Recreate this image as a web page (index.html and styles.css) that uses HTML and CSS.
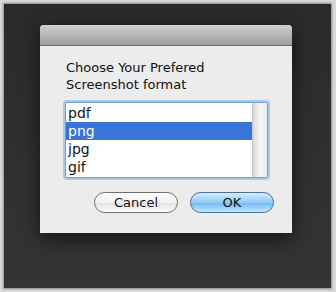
FILE: index.html
```html
<!DOCTYPE html>
<html lang="en">
<head>
    <meta charset="UTF-8">
    <title>Screenshot format</title>
    <link rel="stylesheet" href="styles.css">
</head>
<body>
    <div class="backdrop">
        <div class="dialog">
            <div class="titlebar"></div>
            <div class="dialog-body">
                <p class="prompt">Choose Your Prefered<br>Screenshot format</p>
                <div class="listbox">
                    <div class="list-items">
                        <div class="list-item">pdf</div>
                        <div class="list-item selected">png</div>
                        <div class="list-item">jpg</div>
                        <div class="list-item">gif</div>
                    </div>
                    <div class="scroll-track"></div>
                </div>
                <div class="buttons">
                    <button class="btn">Cancel</button>
                    <button class="btn btn-default">OK</button>
                </div>
            </div>
        </div>
    </div>
</body>
</html>
```

FILE: styles.css
```css
body {
    margin: 0;
    background-color: #d9d9d9;
    font-family: "DejaVu Sans", Verdana, sans-serif;
}

.backdrop {
    margin: 4px 5px 4px 4px;
    height: 284px;
    padding-top: 21px;
    box-sizing: border-box;
    background: linear-gradient(to bottom, #2a2a2a, #303030 60%, #343434);
    box-shadow: 0 0 2px 1px #8a8a8a;
}

.dialog {
    margin-left: 36px;
    width: 252px;
    background-color: #ececec;
    border-radius: 4px 4px 0 0;
    box-shadow: 0 6px 18px rgba(0, 0, 0, 0.6);
}

.titlebar {
    height: 20px;
    border-radius: 4px 4px 0 0;
    background: linear-gradient(to bottom, #d0d0d0, #9d9d9d);
    border-bottom: 1px solid #6e6e6e;
}

.dialog-body {
    padding: 13px 0 20px 23px;
}

.prompt {
    margin: 0 0 9px 3px;
    font-size: 13px;
    line-height: 17px;
    color: #111;
}

.listbox {
    display: flex;
    width: 201px;
    height: 72px;
    padding: 1px 0;
    background-color: #fff;
    border: 1px solid #6d9fd6;
    border-radius: 2px;
    box-shadow: 0 0 0 2px #a8c8ec;
    margin-left: 2px;
}

.list-items {
    flex: 1;
}

.list-item {
    height: 18px;
    line-height: 18px;
    padding-left: 2px;
    font-size: 14px;
    color: #111;
}

.list-item.selected {
    background-color: #3875d7;
    color: #fff;
}

.scroll-track {
    width: 14px;
    margin: -1px 0;
    background: linear-gradient(to right, #d8d8d8, #f8f8f8 50%, #ebebeb);
    border-left: 1px solid #c8c8c8;
}

.buttons {
    display: flex;
    gap: 12px;
    margin: 14px 0 0 31px;
}

.btn {
    width: 84px;
    height: 21px;
    padding: 0;
    border: 1px solid #6f6f6f;
    border-radius: 11px;
    background: linear-gradient(to bottom, #ffffff, #f2f2f2 50%, #e2e2e2 51%, #fdfdfd);
    font-family: inherit;
    font-size: 13px;
    color: #111;
}

.btn-default {
    border-color: #4a6fa0;
    background: linear-gradient(to bottom, #d5ecfd, #8ecbf7 50%, #6bb8f3 51%, #c3e6fd);
}
```
